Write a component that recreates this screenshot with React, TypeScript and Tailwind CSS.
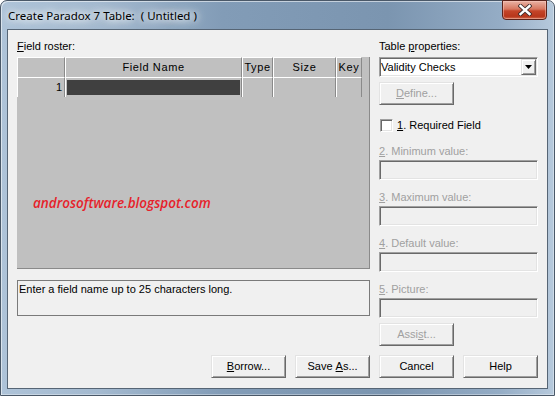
import React from 'react';

const ui = "font-['Liberation_Sans',Arial,sans-serif] text-[11px] leading-[13px] text-black";

const raised =
  'bg-[#f0f0f0] border border-t-[#e3e3e3] border-l-[#e3e3e3] border-r-[#696969] border-b-[#696969] shadow-[inset_1px_1px_0_#ffffff,inset_-1px_-1px_0_#a0a0a0]';

const sunken =
  'border border-t-[#a0a0a0] border-l-[#a0a0a0] border-r-white border-b-white shadow-[inset_1px_1px_0_#696969,inset_-1px_-1px_0_#e3e3e3]';

const Button = ({ children, disabled }: { children: React.ReactNode; disabled?: boolean }) => (
  <div className={`h-[23px] w-[75px] flex items-center justify-center ${raised} ${disabled ? 'text-[#a0a0a0]' : 'text-black'}`}>
    {children}
  </div>
);

const Field = ({ label, mnemonic }: { label: string; mnemonic: string }) => (
  <>
    <div className="mt-[10px] h-[16px] leading-[15px] text-[#a0a0a0]">
      <span className="underline underline-offset-1">{mnemonic}</span>
      {label}
    </div>
    <div className={`h-[20px] w-[159px] bg-[#f0f0f0] ${sunken}`}></div>
  </>
);

const cols = [
  { w: 'w-[48px]', label: '' },
  { w: 'w-[177px]', label: 'Field Name' },
  { w: 'w-[31px]', label: 'Type' },
  { w: 'w-[63px]', label: 'Size' },
  { w: 'w-[26px]', label: 'Key' },
];

const cell = 'h-full border-l border-t border-l-white border-t-white border-r border-r-[#8a8a8a]';

export default function App() {
  return (
    <div className={`${ui} w-[555px] h-[396px] bg-white`}>
      <div className="w-[555px] h-[396px] rounded-t-[7px] border border-[#4a5868] bg-[linear-gradient(90deg,#aec3d8_0%,#a3b9cf_18%,#829cb7_40%,#7b95b0_70%,#94acc5_90%,#b6c9dc_100%)] shadow-[inset_1px_1px_0_rgba(255,255,255,0.55),inset_-1px_-1px_0_rgba(255,255,255,0.35)] flex flex-col">
        {/* title bar */}
        <div className="relative h-[28px] flex items-center pl-[7px]">
          <span className="font-['Noto_Sans',sans-serif] text-[11.5px] leading-[16px] mt-[2px] text-black [text-shadow:0_0_6px_#ffffff,0_0_10px_#ffffff,0_0_14px_#e8f0f8]">
            Create Paradox 7 Table:&nbsp; ( Untitled )
          </span>
          <div className="absolute right-[7px] top-[-1px] h-[20px] w-[45px] rounded-b-[4px] border border-[#5b231b] bg-[linear-gradient(180deg,#e9b2a4_0%,#d7765f_45%,#c44529_55%,#b8361b_85%,#d06a4c_100%)] shadow-[inset_0_0_0_1px_rgba(255,210,200,0.45)] flex items-center justify-center">
            <svg width="14" height="12" viewBox="0 0 14 12">
              <path d="M2.5 2 L11.5 10 M11.5 2 L2.5 10" stroke="#3a2a2a" strokeWidth="4.2" strokeLinecap="square" />
              <path d="M2.5 2 L11.5 10 M11.5 2 L2.5 10" stroke="#ffffff" strokeWidth="2.4" strokeLinecap="square" />
            </svg>
          </div>
        </div>

        {/* client area */}
        <div className="mx-[6px] h-[360px] border border-[#566575] bg-[#f0f0f0] flex pl-[9px] pt-[10px] gap-[9px]">
          {/* left column */}
          <div className="w-[353px] flex flex-col">
            <div className="h-[17px]">
              <span className="underline underline-offset-1">F</span>ield roster:
            </div>
            <div className="relative h-[212px] w-[353px] bg-[#c0c0c0] border-r border-b border-r-[#8a8a8a] border-b-[#8a8a8a]">
              <div className="flex h-[20px]">
                {cols.map((c, i) => (
                  <div key={i} className={`${c.w} ${cell} flex items-center justify-center tracking-[0.6px]`}>
                    {c.label}
                  </div>
                ))}
              </div>
              <div className="flex h-[20px]">
                {cols.map((c, i) => (
                  <div key={i} className={`${c.w} ${cell} flex items-center ${i === 0 ? 'justify-end pr-[2px]' : ''}`}>
                    {i === 0 && '1'}
                    {i === 1 && <div className="mx-[1px] h-[15px] w-[173px] bg-[#404040]"></div>}
                  </div>
                ))}
              </div>
              <div className="absolute left-[16px] top-[137px] font-['Open_Sans',sans-serif] italic font-semibold text-[13.5px] leading-[18px] text-[#e61f2b]">
                androsoftware.blogspot.com
              </div>
            </div>
            <div className="mt-[11px] h-[36px] border border-[#7a7a7a] pl-[1px] pt-[2px]">
              Enter a field name up to 25 characters long.
            </div>
            <div className="mt-[39px] flex justify-end gap-[9px]">
              <Button>
                <span className="underline underline-offset-1">B</span>orrow...
              </Button>
              <Button>
                Save&nbsp;<span className="underline underline-offset-1">A</span>s...
              </Button>
            </div>
          </div>

          {/* right column */}
          <div className="w-[159px] flex flex-col">
            <div className="h-[17px]">
              Table <span className="underline underline-offset-1">p</span>roperties:
            </div>
            <div className={`relative h-[20px] w-[159px] bg-white ${sunken} flex items-center pl-[1px]`}>
              Validity Checks
              <div className={`absolute right-[1px] top-[1px] h-[16px] w-[15px] ${raised} flex items-center justify-center`}>
                <svg width="7" height="4" viewBox="0 0 7 4">
                  <path d="M0 0 H7 L3.5 4 Z" fill="#000000" />
                </svg>
              </div>
            </div>
            <div className="mt-[5px]">
              <Button disabled>
                <span className="underline underline-offset-1">D</span>efine...
              </Button>
            </div>
            <div className="mt-[14px] h-[13px] flex items-center">
              <div className={`ml-[1px] h-[13px] w-[13px] bg-white ${sunken}`}></div>
              <span className="ml-[4px]">
                <span className="underline underline-offset-1">1</span>. Required Field
              </span>
            </div>
            <div className="mt-[2px]"></div>
            <Field mnemonic="2" label=". Minimum value:" />
            <Field mnemonic="3" label=". Maximum value:" />
            <Field mnemonic="4" label=". Default value:" />
            <Field mnemonic="5" label=". Picture:" />
            <div className="mt-[5px]">
              <Button disabled>
                Assi<span className="underline underline-offset-1">s</span>t...
              </Button>
            </div>
            <div className="mt-[9px] flex gap-[9px]">
              <Button>Cancel</Button>
              <Button>Help</Button>
            </div>
          </div>
        </div>
      </div>
    </div>
  );
}
